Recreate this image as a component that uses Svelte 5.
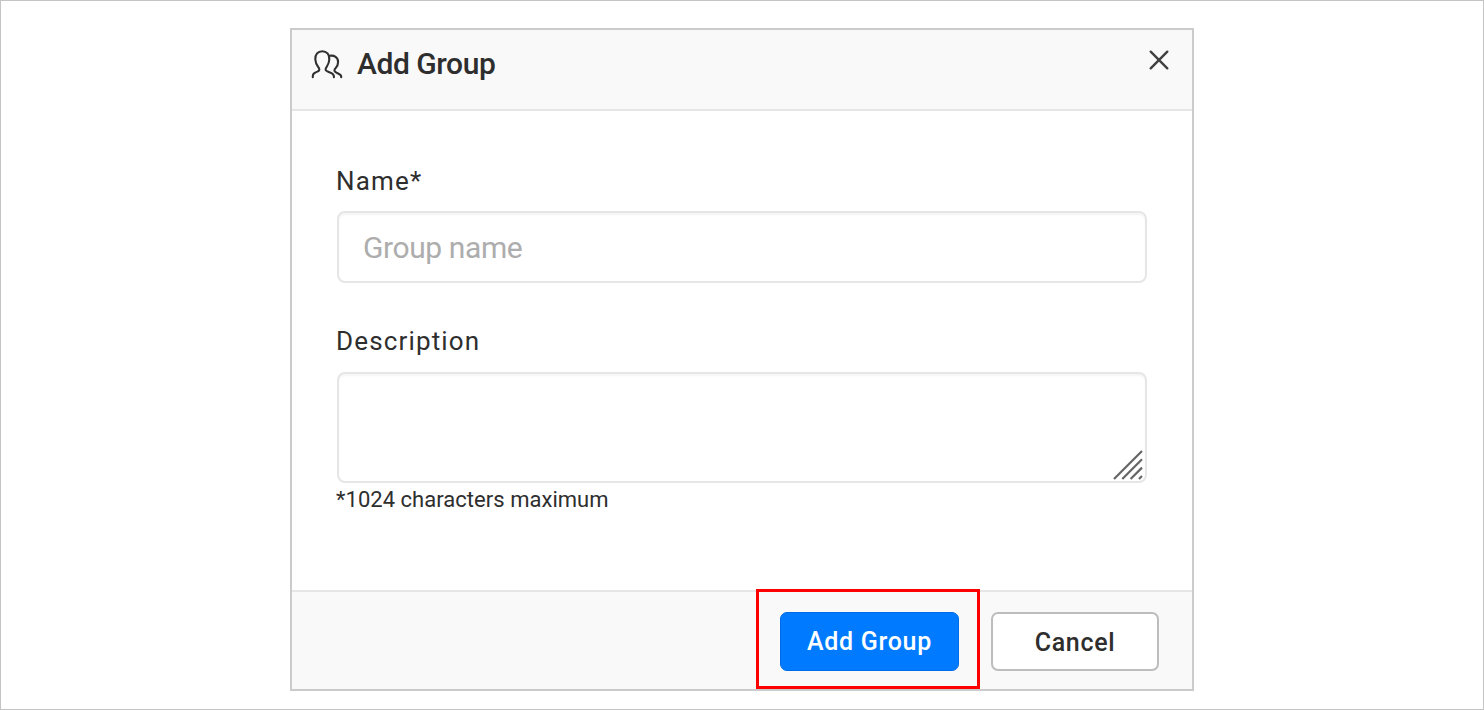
<script>
  let name = $state('');
  let description = $state('');
</script>

<main class="page">
  <section class="dialog" role="dialog" aria-labelledby="dialog-title">
    <header class="header">
      <svg class="group-icon" width="32" height="30" viewBox="0 0 32 30" fill="none" stroke="#303030" stroke-width="2.1" stroke-linecap="round" stroke-linejoin="round">
        <path d="M1.8 27.2V26.2C1.8 23.4 3.6 22.7 6.4 21.6C8.4 20.8 8.7 19.6 7.9 18C6.5 16 4.6 14.2 4.3 9.5C4 4.3 6.9 1.2 11.3 1.2C15.7 1.2 18.6 4.3 18.3 9.5C18 14.2 16.1 16 15 18C14.2 19.8 14.5 20.8 16.8 21.6C20 22.7 22.9 23.4 22.9 26.2V27.2" />
        <path d="M18.3 5.8C23.4 4.8 27.1 7.4 27.1 12C27.1 16.3 24.9 17.6 23.8 19.2C22.9 21 23.7 21.8 25.7 22.8C28.3 24 30.2 24.6 30.2 26.4V27.2" />
      </svg>
      <h1 id="dialog-title">Add Group</h1>
      <button class="close" type="button" aria-label="Close">
        <svg width="20" height="20" viewBox="0 0 20 20" fill="none" stroke="#404040" stroke-width="2.4" stroke-linecap="round">
          <path d="M1.7 1.7L18.3 18.3M18.3 1.7L1.7 18.3" />
        </svg>
      </button>
    </header>

    <div class="body">
      <label class="label" for="group-name">Name*</label>
      <input id="group-name" class="field" type="text" placeholder="Group name" bind:value={name} />
      <label class="label second" for="group-description">Description</label>
      <div class="area">
        <textarea id="group-description" class="field" maxlength="1024" bind:value={description}></textarea>
        <svg class="grip" width="30" height="30" viewBox="0 0 30 30" fill="none" stroke="#666" stroke-width="2.2">
          <path d="M1 29L29 1M9.3 29L29 9.3M17.6 29L29 17.6M26 29L29 26" />
        </svg>
      </div>
      <p class="hint">*1024 characters maximum</p>
    </div>

    <footer class="footer">
      <div class="highlight">
        <button class="btn primary" type="button">Add Group</button>
      </div>
      <button class="btn cancel" type="button">Cancel</button>
    </footer>
  </section>
</main>

<style>
  * {
    box-sizing: border-box;
  }

  .page {
    height: 710px;
    padding: 27px 0 0 289px;
    border: 1px solid #c4c4c4;
    background: #fff;
    color: #2e2e2e;
    font-family: Roboto, 'Liberation Sans', sans-serif;
    overflow: hidden;
  }

  .dialog {
    display: flex;
    flex-direction: column;
    width: 904px;
    height: 663px;
    border: 2px solid #cbcbcb;
    background: #fff;
  }

  .header {
    display: flex;
    align-items: flex-start;
    flex: none;
    height: 81px;
    padding: 19px 23px 0 19px;
    border-bottom: 2px solid #e6e6e6;
    background: #f9f9f9;
  }

  .group-icon {
    flex: none;
    margin-top: 1px;
  }

  h1 {
    flex: 1;
    margin: -3px 0 0 14px;
    font-size: 30px;
    font-weight: 500;
    line-height: 36px;
    letter-spacing: -0.45px;
  }

  .close {
    display: flex;
    margin-top: 1px;
    padding: 0;
    border: 0;
    background: none;
  }

  .body {
    flex: 1;
    padding: 54px 45px 0;
  }

  .label {
    display: block;
    height: 32px;
    margin: 0 0 14px -1px;
    font-size: 26px;
    line-height: 32px;
    letter-spacing: 1.15px;
  }

  .second {
    margin-top: 42px;
    margin-bottom: 15px;
  }

  .field {
    display: block;
    width: 810px;
    margin: 0;
    border: 2px solid #e6e6e6;
    border-radius: 8px;
    outline: 0;
    background: #fff;
    box-shadow: inset 0 2px 2px #f5f5f5;
    color: inherit;
    font: 400 30px Roboto, 'Liberation Sans', sans-serif;
    letter-spacing: -0.4px;
  }

  input.field {
    height: 72px;
    padding: 0 24px;
  }

  .field::placeholder {
    color: #adadad;
    opacity: 1;
  }

  .area {
    position: relative;
    width: 810px;
  }

  textarea.field {
    height: 111px;
    padding: 14px 24px;
    resize: none;
  }

  .grip {
    position: absolute;
    right: 4px;
    bottom: 3px;
  }

  .hint {
    margin: 3px 0 0 -1px;
    font-size: 22px;
    line-height: 28px;
    letter-spacing: 0.03px;
  }

  .footer {
    display: flex;
    align-items: flex-start;
    justify-content: flex-end;
    flex: none;
    height: 99px;
    padding-right: 33px;
    border-top: 2px solid #e6e6e6;
    background: #f9f9f9;
  }

  .highlight {
    flex: none;
    width: 224px;
    height: 100px;
    margin: -3px 11px 0 0;
    padding: 20px 20px 20px 21px;
    border: 3px solid #f00;
  }

  .btn {
    border-radius: 7px;
    font: 500 25px Roboto, 'Liberation Sans', sans-serif;
    letter-spacing: 0.7px;
    padding: 0;
    height: 59px;
    white-space: nowrap;
  }

  .primary {
    display: block;
    width: 179px;
    border: 1px solid #006be8;
    background: #007bff;
    color: #fff;
  }

  .cancel {
    width: 168px;
    margin-top: 20px;
    padding-top: 1px;
    border: 2px solid #bdbdbd;
    background: #fff;
    color: #2e2e2e;
  }
</style>
